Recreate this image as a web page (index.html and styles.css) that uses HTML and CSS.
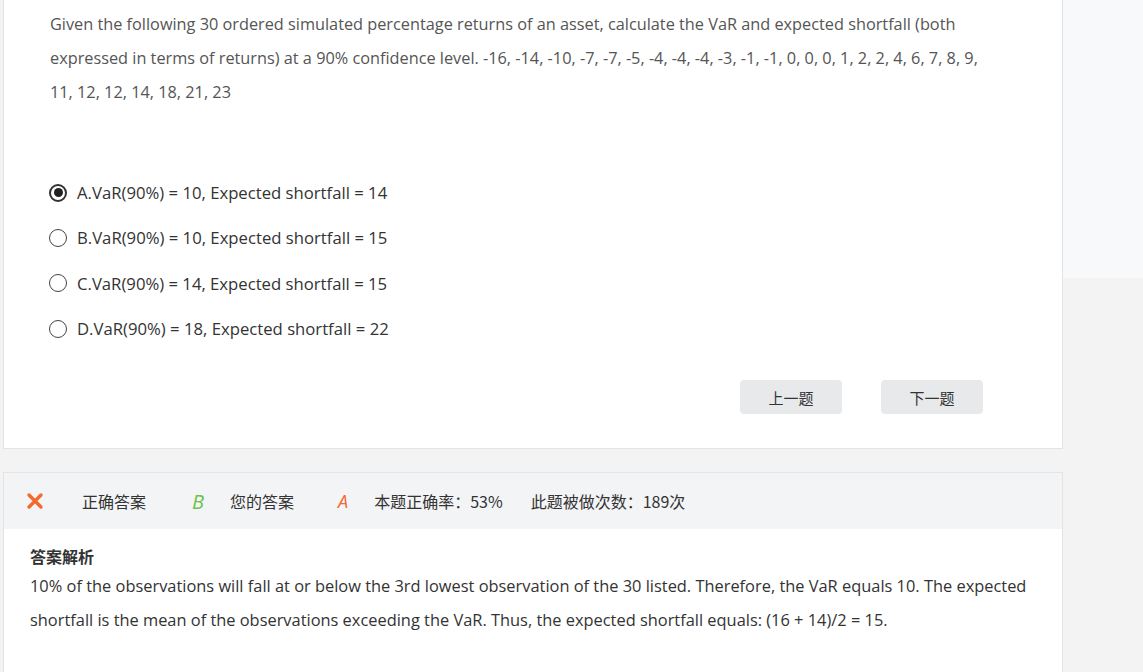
FILE: index.html
```html
<!DOCTYPE html>
<html lang="zh">
<head>
<meta charset="utf-8">
<link rel="stylesheet" href="styles.css">
</head>
<body>
<div class="page">
  <div class="main">
    <div class="card question">
      <p class="stem">Given the following 30 ordered simulated percentage returns of an asset, calculate the VaR and expected shortfall (both expressed in terms of returns) at a 90% confidence level. -16, -14, -10, -7, -7, -5, -4, -4, -4, -3, -1, -1, 0, 0, 0, 1, 2, 2, 4, 6, 7, 8, 9, 11, 12, 12, 14, 18, 21, 23</p>
      <ul class="options">
        <li class="option"><span class="radio checked"></span><span>A.VaR(90%) = 10, Expected shortfall = 14</span></li>
        <li class="option"><span class="radio"></span><span>B.VaR(90%) = 10, Expected shortfall = 15</span></li>
        <li class="option"><span class="radio"></span><span>C.VaR(90%) = 14, Expected shortfall = 15</span></li>
        <li class="option"><span class="radio"></span><span>D.VaR(90%) = 18, Expected shortfall = 22</span></li>
      </ul>
      <div class="nav">
        <button class="btn">上一题</button>
        <button class="btn">下一题</button>
      </div>
    </div>
    <div class="card result">
      <div class="result-head">
        <svg class="wrong" width="18" height="18" viewBox="0 0 18 18"><path d="M3 3 L15 15 M15 3 L3 15" stroke="#f26a2e" stroke-width="3.4" stroke-linecap="round"/></svg>
        <span class="label l-correct">正确答案</span>
        <span class="letter green">B</span>
        <span class="label l-yours">您的答案</span>
        <span class="letter orange">A</span>
        <span class="label l-rate">本题正确率：53%</span>
        <span class="label">此题被做次数：189次</span>
      </div>
      <div class="result-body">
        <h3 class="title">答案解析</h3>
        <p class="explain">10% of the observations will fall at or below the 3rd lowest observation of the 30 listed. Therefore, the VaR equals 10. The expected shortfall is the mean of the observations exceeding the VaR. Thus, the expected shortfall equals: (16 + 14)/2 = 15.</p>
      </div>
    </div>
  </div>
  <div class="side">
    <div class="side-top"></div>
  </div>
</div>
</body>
</html>
```
FILE: styles.css
```css
* { box-sizing: border-box; }
html, body { margin: 0; padding: 0; }
body {
  background: #f3f3f3;
  font-family: "Open Sans", "Noto Sans CJK SC", sans-serif;
  color: #333;
  height: 672px;
  overflow: hidden;
}
.page {
  display: flex;
  padding-left: 3px;
}
.main {
  width: 1060px;
  display: flex;
  flex-direction: column;
  gap: 23px;
}
.side {
  flex: 1;
}
.side-top {
  height: 278px;
  background: #f8f9fa;
}
.card {
  background: #fff;
  border: 1px solid #e4e4e4;
}
.question {
  border-top: none;
  height: 449px;
  padding: 7px 0 0 46px;
}
.stem {
  margin: 0;
  font-size: 16.3px;
  line-height: 34px;
  color: #555;
  width: 945px;
}
.options {
  list-style: none;
  margin: 61px 0 0 0;
  padding: 0;
}
.option {
  display: flex;
  align-items: center;
  height: 45.3px;
  font-size: 16.7px;
  color: #333;
}
.radio {
  width: 18px;
  height: 18px;
  border: 1.5px solid #444;
  border-radius: 50%;
  margin-right: 10px;
  margin-left: -1px;
  display: flex;
  align-items: center;
  justify-content: center;
}
.radio.checked {
  border-width: 2px;
  border-color: #333;
}
.radio.checked::after {
  content: "";
  width: 9px;
  height: 9px;
  border-radius: 50%;
  background: #222;
}
.nav {
  display: flex;
  gap: 39px;
  margin: 29px 0 0 690px;
}
.btn {
  width: 102px;
  height: 34px;
  border: none;
  border-radius: 4px;
  background: #e8e9eb;
  font-family: "Noto Sans CJK SC", sans-serif;
  font-size: 15px;
  color: #333;
  padding: 0;
}
.result {
  height: 210px;
}
.result-head {
  height: 56px;
  background: #f3f4f6;
  display: flex;
  align-items: center;
  padding-left: 22px;
  font-family: "Noto Sans CJK SC", sans-serif;
  font-size: 16px;
  color: #333;
}
.wrong { margin-right: 38px; }
.l-correct { margin-right: 46px; }
.l-yours { margin-right: 44px; }
.l-rate { margin-right: 28px; }
.letter {
  font-family: "Open Sans", sans-serif;
  font-style: italic;
  font-size: 20px;
  margin-right: 26px;
}
.letter.green { color: #6cc24a; }
.letter.orange { color: #f26a2e; font-size: 18px; }
.result-body {
  padding: 14px 0 0 26px;
}
.title {
  margin: 0;
  font-family: "Noto Sans CJK SC", sans-serif;
  font-weight: bold;
  font-size: 16px;
  line-height: 26px;
  color: #333;
}
.explain {
  margin: 0;
  font-size: 16.4px;
  line-height: 34px;
  color: #333;
  width: 1010px;
}
```
